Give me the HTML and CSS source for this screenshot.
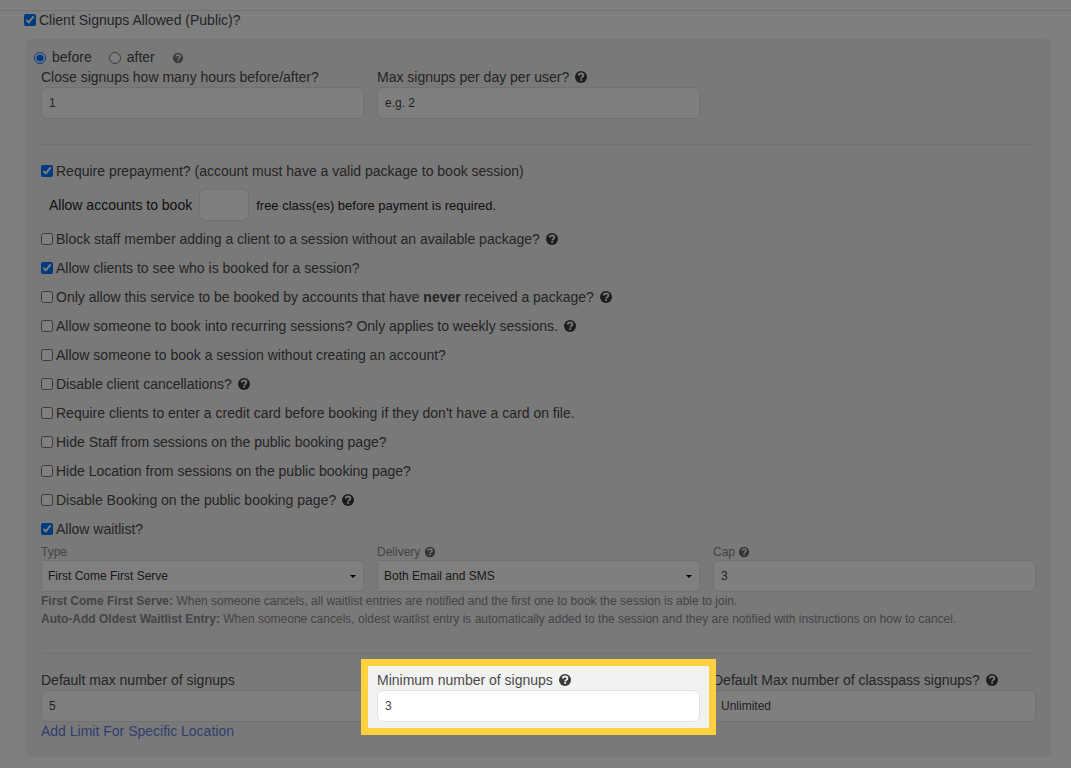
FILE: index.html
```html
<!DOCTYPE html>
<html lang="en">
<head>
  <meta charset="UTF-8" />
  <meta name="viewport" content="width=device-width, initial-scale=1.0"/>
  <title>Service Signup Settings</title>
  <link rel="stylesheet" href="styles.css">
</head>
<body>
  <!-- Question mark icon, reused by every help button -->
  <svg class="sprite" aria-hidden="true">
    <symbol id="help" viewBox="0 0 14 14">
      <circle cx="7" cy="7" r="6"/>
      <path d="M4.6 5.5C4.8 4.1 5.7 3.5 7 3.5c1.3 0 2.4.7 2.4 1.9 0 .9-.6 1.3-1.2 1.7-.7.4-1 .6-1 1.3" fill="none" stroke="#f2f2f2" stroke-width="1.8"/>
      <path d="M6.2 9.2h1.9v1.7H6.2z" fill="#f2f2f2"/>
    </symbol>
  </svg>

  <main class="page">
    <label class="check"><input type="checkbox" checked> <span>Client Signups Allowed (Public)?</span></label>

    <form class="panel">
      <!-- Signup window -->
      <div class="timing">
        <label><input type="radio" name="timing" checked> before</label>
        <label><input type="radio" name="timing"> after</label>
        <svg class="help faded"><use href="#help"/></svg>
      </div>

      <div class="row">
        <div class="field">
          <label for="close-hours">Close signups how many hours before/after?</label>
          <input type="text" id="close-hours" value="1">
        </div>
        <div class="field">
          <label for="max-day">Max signups per day per user? <svg class="help"><use href="#help"/></svg></label>
          <input type="text" id="max-day" placeholder="e.g. 2">
        </div>
      </div>

      <hr>

      <!-- Booking rules -->
      <label class="check"><input type="checkbox" checked> <span>Require prepayment? (account must have a valid package to book session)</span></label>
      <div class="free-classes">
        <label for="free">Allow accounts to book</label>
        <input type="text" id="free">
        <span class="after">free class(es) before payment is required.</span>
      </div>

      <div class="options">
        <label class="check"><input type="checkbox"> <span>Block staff member adding a client to a session without an available package? <svg class="help"><use href="#help"/></svg></span></label>
        <label class="check"><input type="checkbox" checked> <span>Allow clients to see who is booked for a session?</span></label>
        <label class="check"><input type="checkbox"> <span>Only allow this service to be booked by accounts that have <b>never</b> received a package? <svg class="help"><use href="#help"/></svg></span></label>
        <label class="check"><input type="checkbox"> <span>Allow someone to book into recurring sessions? Only applies to weekly sessions. <svg class="help"><use href="#help"/></svg></span></label>
        <label class="check"><input type="checkbox"> <span>Allow someone to book a session without creating an account?</span></label>
        <label class="check"><input type="checkbox"> <span>Disable client cancellations? <svg class="help"><use href="#help"/></svg></span></label>
        <label class="check"><input type="checkbox"> <span>Require clients to enter a credit card before booking if they don't have a card on file.</span></label>
        <label class="check"><input type="checkbox"> <span>Hide Staff from sessions on the public booking page?</span></label>
        <label class="check"><input type="checkbox"> <span>Hide Location from sessions on the public booking page?</span></label>
        <label class="check"><input type="checkbox"> <span>Disable Booking on the public booking page? <svg class="help"><use href="#help"/></svg></span></label>
        <label class="check"><input type="checkbox" checked> <span>Allow waitlist?</span></label>
      </div>

      <!-- Waitlist -->
      <div class="row waitlist">
        <div class="field">
          <label for="type">Type</label>
          <div class="select">
            <select id="type"><option>First Come First Serve</option><option>Auto-Add Oldest Waitlist Entry</option></select>
          </div>
        </div>
        <div class="field">
          <label for="delivery">Delivery <svg class="help"><use href="#help"/></svg></label>
          <div class="select">
            <select id="delivery"><option>Both Email and SMS</option></select>
          </div>
        </div>
        <div class="field">
          <label for="cap">Cap <svg class="help"><use href="#help"/></svg></label>
          <input type="text" id="cap" value="3">
        </div>
      </div>
      <div class="notes">
        <p><b>First Come First Serve:</b> When someone cancels, all waitlist entries are notified and the first one to book the session is able to join.</p>
        <p><b>Auto-Add Oldest Waitlist Entry:</b> When someone cancels, oldest waitlist entry is automatically added to the session and they are notified with instructions on how to cancel.</p>
      </div>

      <hr>

      <!-- Limits -->
      <div class="row">
        <div class="field">
          <label for="max">Default max number of signups</label>
          <input type="text" id="max" value="5">
          <a href="#">Add Limit For Specific Location</a>
        </div>
        <div class="field spotlight">
          <label for="min">Minimum number of signups <svg class="help"><use href="#help"/></svg></label>
          <input type="text" id="min" value="3">
        </div>
        <div class="field">
          <label for="classpass">Default Max number of classpass signups? <svg class="help"><use href="#help"/></svg></label>
          <input type="text" id="classpass" placeholder="Unlimited">
        </div>
      </div>
    </form>
  </main>
</body>
</html>
```

FILE: styles.css
```css
* {
  box-sizing: border-box;
}

body {
  margin: 0;
  overflow-x: hidden;
  background: #fff;
  color: #4a4a4a;
  font-family: "Liberation Sans", Arial, sans-serif;
  font-size: 14px;
  line-height: 19px;
}

.sprite {
  position: absolute;
  width: 0;
  height: 0;
}

.page {
  margin-top: 10px;
  padding: 0 20px 11px 24px;
  border-top: 1px solid #e5e5e5;
}

.check {
  display: flex;
  align-items: center;
  gap: 3px;
}

.check input {
  width: 12px;
  height: 12px;
  margin: 0 0 2px;
  flex: none;
}

.panel {
  margin: 9px 0 0 2px;
  padding: 8px 15px 16px;
  background: #f2f2f2;
  border-radius: 5px;
}

.timing {
  display: flex;
  align-items: center;
  gap: 17px;
  margin-left: -7px;
  height: 21px;
}

.timing label {
  display: flex;
  align-items: center;
  gap: 6px;
}

.timing input {
  width: 12px;
  height: 12px;
  margin: 0;
}

.row {
  display: grid;
  grid-template-columns: repeat(3, 1fr);
  align-items: start;
  gap: 13px;
}

.field {
  position: relative;
  display: flex;
  flex-direction: column;
}

input[type="text"],
select {
  width: 100%;
  height: 32px;
  padding: 0 7px;
  border: 1px solid #e2e2e2;
  border-radius: 6px;
  background: #fff;
  color: #444;
  font-family: inherit;
  font-size: 12px;
}

::placeholder {
  color: #444;
}

.select {
  position: relative;
  display: flex;
}

select {
  appearance: none;
  padding: 0 6px;
  border-radius: 2px;
  color: #333;
}

.select::after {
  content: "";
  position: absolute;
  top: 15px;
  right: 8px;
  border: 3px solid transparent;
  border-top-color: #000;
  border-bottom: 0;
  pointer-events: none;
}

hr {
  width: 100%;
  height: 1px;
  margin: 25px 0 17px;
  border: 0;
  background: #e2e2e2;
}

.help {
  width: 14px;
  height: 14px;
  margin-left: 1px;
  fill: #3a3a3a;
  vertical-align: -2px;
}

.faded {
  width: 12px;
  height: 12px;
  margin-left: 0;
  fill: #777;
}

.free-classes {
  display: flex;
  align-items: center;
  gap: 7px;
  margin: 8px 0 9px 8px;
  color: #222;
}

.free-classes input[type="text"] {
  width: 50px;
}

.free-classes .after {
  font-size: 13px;
}

.options {
  display: flex;
  flex-direction: column;
  gap: 10px;
}

.waitlist {
  margin-top: 6px;
}

.waitlist label {
  color: #888;
  font-size: 12px;
  line-height: 15px;
}

.waitlist .help {
  width: 12px;
  height: 12px;
  margin-left: 0;
  fill: #666;
}

.notes {
  color: #888;
  font-size: 12px;
  line-height: 18px;
}

.notes p {
  margin: 0;
}

a {
  color: #5f7fe0;
  text-decoration: none;
}

/* Yellow frame over the field, everything around it dimmed */
.spotlight::after {
  content: "";
  position: absolute;
  inset: -12px -16px -13px;
  z-index: 1;
  border: 7px solid #ffd13f;
  box-shadow: 0 0 0 2000px rgba(0, 0, 0, 0.5);
  pointer-events: none;
}
```
